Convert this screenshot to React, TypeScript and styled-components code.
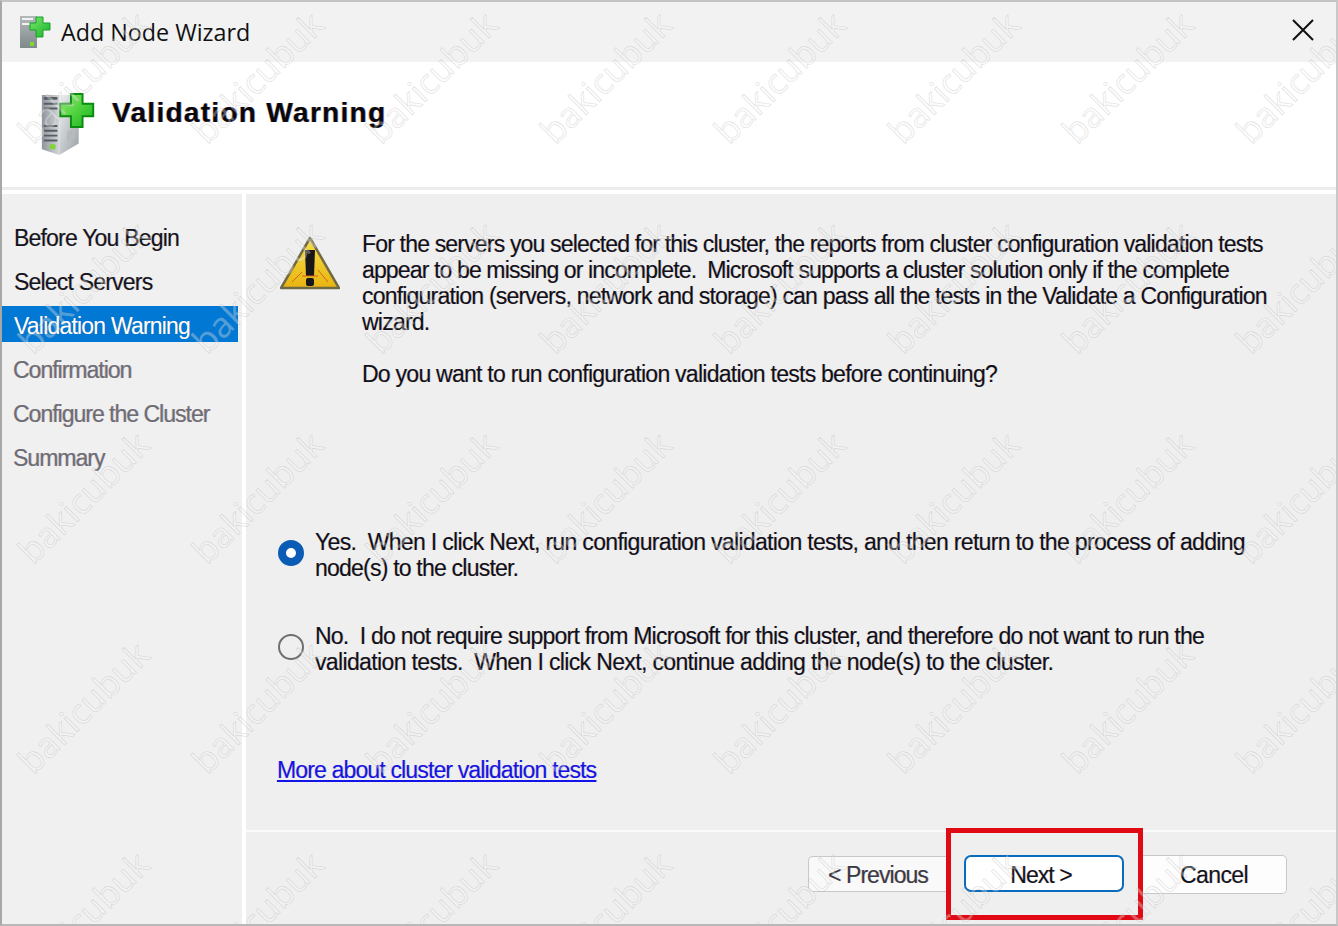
import styled, { createGlobalStyle } from 'styled-components';

const GlobalStyle = createGlobalStyle`
  html, body { margin: 0; padding: 0; background: #f0f0f0; }
  * { box-sizing: border-box; }
`;

const Win = styled.div`
  position: relative;
  width: 1338px;
  height: 926px;
  overflow: hidden;
  display: flex;
  flex-direction: column;
  background: #fff;
  border-top: 2px solid #c4c4c4;
  border-left: 2px solid #a8a8a8;
  border-right: 2px solid #c8c8c8;
  border-bottom: 2px solid #b8b8b8;
  font-family: 'Liberation Sans', Arial, sans-serif;
  color: #101018;
  text-shadow: -0.6px 0 rgba(220, 140, 60, 0.3), 0.6px 0 rgba(40, 70, 170, 0.3);
`;

const EdgeMark = styled.i<{ $top: number; $h: number }>`
  position: absolute;
  left: -2px;
  top: ${(p) => p.$top}px;
  width: 2px;
  height: ${(p) => p.$h}px;
  background: #55555c;
`;

const TitleBar = styled.div`
  height: 60px;
  flex: none;
  display: flex;
  align-items: center;
  background: #f2f2f2;
  padding-left: 17px;
  gap: 9px;
  text-shadow: none;
`;

const TitleText = styled.div`
  flex: 1;
  font-family: 'Open Sans', 'Noto Sans', sans-serif;
  font-size: 23.3px;
  color: #111;
`;

const CloseBtn = styled.div`
  width: 24px;
  height: 24px;
  margin-right: 21px;
  margin-top: -4px;
`;

const Banner = styled.div`
  height: 128px;
  flex: none;
  display: flex;
  align-items: flex-start;
  padding: 30px 0 0 36px;
  gap: 12px;
  background: #fff;
  border-bottom: 3px solid #ececec;
`;

const BannerTitle = styled.h1`
  margin: 3px 0 0;
  font-size: 28px;
  line-height: 36px;
  letter-spacing: 1.3px;
  font-weight: 700;
  color: #08080c;
  text-shadow: -0.7px 0 rgba(220, 130, 40, 0.55), 0.7px 0 rgba(30, 70, 190, 0.55);
`;

const Body = styled.div`
  flex: 1;
  min-height: 0;
  display: flex;
  gap: 4px;
  padding-top: 4px;
  background: #fff;
`;

const Sidebar = styled.nav`
  width: 240px;
  flex: none;
  background: #f0f0f0;
  padding-top: 24px;
  display: flex;
  flex-direction: column;
  gap: 8px;
`;

const Step = styled.div<{ $state: 'done' | 'active' | 'todo' }>`
  width: 236px;
  height: 36px;
  line-height: 40px;
  padding-left: ${(p) => (p.$state === 'todo' ? 11 : 12)}px;
  font-size: 23px;
  letter-spacing: ${(p) => (p.$state === 'todo' ? -1 : -0.8)}px;
  color: ${(p) => (p.$state === 'active' ? '#fff' : p.$state === 'todo' ? '#6d6d75' : '#14141c')};
  background: ${(p) => (p.$state === 'active' ? '#0078d4' : 'transparent')};
`;

const Panel = styled.div`
  flex: 1;
  display: flex;
  flex-direction: column;
  background: #efefef;
`;

const Main = styled.div`
  flex: 1;
  padding: 37px 0 0 31px;
  font-size: 23px;
  line-height: 26px;
  letter-spacing: -0.78px;
`;

const MessageRow = styled.div`
  display: flex;
  align-items: flex-start;
  gap: 22px;
  padding-left: 3px;
`;

const WarnIcon = styled.svg`
  width: 60px;
  height: 54px;
  flex: none;
  margin-top: 5px;
`;

const Line = styled.span<{ $fit?: number }>`
  display: block;
  white-space: pre;
  letter-spacing: ${(p) => p.$fit ?? -0.78}px;
`;

const Question = styled.p`
  margin: 26px 0 0;
  white-space: pre;
  letter-spacing: -0.74px;
`;

const Option = styled.div<{ $gap: number }>`
  display: flex;
  align-items: center;
  gap: 11px;
  margin-top: ${(p) => p.$gap}px;
  padding-left: 1px;
`;

const Radio = styled.span<{ $checked?: boolean }>`
  width: 26px;
  height: 26px;
  flex: none;
  margin-bottom: 4px;
  border-radius: 50%;
  background: ${(p) => (p.$checked ? '#fff' : 'transparent')};
  border: ${(p) => (p.$checked ? '8px solid #0a5cb4' : '2px solid #6f6f6f')};
`;

const HelpLink = styled.a`
  display: block;
  margin-top: 82px;
  color: #1414e6;
  text-decoration: underline;
  white-space: pre;
  letter-spacing: -0.85px;
`;

const Footer = styled.div`
  height: 94px;
  flex: none;
  border-top: 2px solid #fafafa;
`;

const ButtonRow = styled.div`
  display: flex;
  align-items: center;
  justify-content: flex-end;
  margin-top: -4px;
  padding-right: 49px;
`;

const Button = styled.button<{ $edge?: 'left' | 'right' }>`
  height: 37px;
  padding: 3px 0 0;
  background: #fdfdfd;
  border: 1px solid #c8c8c8;
  border-radius: 5px;
  font: inherit;
  font-size: 23px;
  letter-spacing: -0.95px;
  color: #14141c;
  text-shadow: inherit;
  ${(p) => p.$edge === 'left' && 'width: 139px; height: 36px; border-right: 0; border-radius: 5px 0 0 5px; margin-right: -1px; background: #f9f9f9; color: #3a3a44;'}
  ${(p) => p.$edge === 'right' && 'width: 145px; height: 39px; border-left: 0; border-radius: 0 5px 5px 0; margin-left: -1px; letter-spacing: -0.6px;'}
`;

const RedFrame = styled.div`
  position: relative;
  z-index: 1;
  width: 197px;
  height: 92px;
  flex: none;
  display: flex;
  align-items: center;
  justify-content: center;
  border: 5px solid #e10a14;
  background: #efefef;
`;

const DefaultButton = styled(Button)`
  width: 160px;
  border: 2px solid #0a6cbd;
  border-radius: 7px;
  background: #fff;
  margin: -1px 1px 0 0;
  padding-right: 6px;
`;

const Watermarks = styled.div`
  position: absolute;
  inset: -2px;
  pointer-events: none;
  z-index: 2;
`;

const Mark = styled.span`
  position: absolute;
  transform: translate(-50%, -50%) rotate(-45deg);
  font-family: 'Open Sans', sans-serif;
  font-size: 35px;
  line-height: 1;
  color: rgba(250, 250, 250, 0.32);
  -webkit-text-stroke: 0.8px rgba(150, 150, 150, 0.25);
  text-shadow: none;
  white-space: nowrap;
`;

const TitleIcon = () => (
  <svg width="33" height="34" viewBox="0 0 33 34" style={{ flex: 'none' }}>
    <defs>
      <linearGradient id="tbody" x1="0" y1="0" x2="0" y2="1">
        <stop offset="0" stopColor="#b4b8bb" />
        <stop offset="1" stopColor="#7f8a8a" />
      </linearGradient>
      <linearGradient id="tplus" x1="0" y1="0" x2="1" y2="1">
        <stop offset="0" stopColor="#7be86a" />
        <stop offset="1" stopColor="#16b32a" />
      </linearGradient>
    </defs>
    <rect x="1" y="1" width="17" height="32" fill="url(#tbody)" />
    <path d="M3 3h11v2H3zM3 8h11v2H3z" fill="#f2f2f2" />
    <rect x="11" y="27" width="4" height="4" fill="#7fd636" />
    <path
      d="M17 2 H24 V8 H31 V15 H24 V22 H17 V15 H11 V8 H17 Z"
      fill="url(#tplus)"
      stroke="#16a02a"
      strokeWidth="1"
    />
  </svg>
);

const ServerIcon = () => (
  <svg width="62" height="64" viewBox="0 0 64 64" style={{ flex: 'none' }}>
    <defs>
      <linearGradient id="front" x1="0" y1="0" x2="1" y2="0">
        <stop offset="0" stopColor="#8f959c" />
        <stop offset="1" stopColor="#d3d7da" />
      </linearGradient>
      <linearGradient id="side" x1="0" y1="0" x2="1" y2="1">
        <stop offset="0" stopColor="#f0f2f3" />
        <stop offset="1" stopColor="#9aa0a5" />
      </linearGradient>
      <linearGradient id="plus" x1="0" y1="0" x2="1" y2="1">
        <stop offset="0" stopColor="#8df06c" />
        <stop offset="1" stopColor="#16b416" />
      </linearGradient>
    </defs>
    <path d="M4 2 L22 2 L22 64 L4 58 Z" fill="url(#front)" />
    <path d="M22 2 L42 2 L42 52 L22 64 Z" fill="url(#side)" />
    <path d="M6 4h14v3H6zM6 10h14v2H6zM6 15h14v2H6zM6 33h14v2H6zM6 38h14v2H6zM6 43h14v2H6zM6 48h14v2H6z" fill="#565c62" />
    <path d="M30 40 L38 36 V46 L30 50 Z" fill="#b5babd" />
    <rect x="12" y="53" width="6" height="5" fill="#7fd636" />
    <path
      d="M34 11 H23 V24 H34 V35 H46 V24 H57 V11 H46 V1 H34 Z"
      fill="url(#plus)"
      stroke="#0c8a12"
      strokeWidth="2"
    />
  </svg>
);

const steps: { label: string; state: 'done' | 'active' | 'todo' }[] = [
  { label: 'Before You Begin', state: 'done' },
  { label: 'Select Servers', state: 'done' },
  { label: 'Validation Warning', state: 'active' },
  { label: 'Confirmation', state: 'todo' },
  { label: 'Configure the Cluster', state: 'todo' },
  { label: 'Summary', state: 'todo' },
];

const marks: [number, number][] = [];
[77, 287, 497, 707, 917].forEach((y) => {
  [83, 257, 431, 605, 779, 953, 1127, 1301].forEach((x) => marks.push([x, y]));
});

export default function App() {
  return (
    <>
      <GlobalStyle />
      <Win>
        <EdgeMark $top={18} $h={46} />
        <EdgeMark $top={232} $h={50} />
        <EdgeMark $top={348} $h={36} />
        <TitleBar>
          <TitleIcon />
          <TitleText>Add Node Wizard</TitleText>
          <CloseBtn>
            <svg width="24" height="24" viewBox="0 0 24 24">
              <path d="M2 2 L22 22 M22 2 L2 22" stroke="#111" strokeWidth="2" fill="none" />
            </svg>
          </CloseBtn>
        </TitleBar>
        <Banner>
          <ServerIcon />
          <BannerTitle>Validation Warning</BannerTitle>
        </Banner>
        <Body>
          <Sidebar>
            {steps.map((s) => (
              <Step key={s.label} $state={s.state}>
                {s.label}
              </Step>
            ))}
          </Sidebar>
          <Panel>
            <Main>
              <MessageRow>
                <WarnIcon viewBox="0 0 60 54">
                  <defs>
                    <linearGradient id="warn" x1="0" y1="0" x2="0" y2="1">
                      <stop offset="0" stopColor="#f7e04a" />
                      <stop offset="1" stopColor="#e8b410" />
                    </linearGradient>
                  </defs>
                  <path d="M30 2 L59 52 L1 52 Z" fill="url(#warn)" stroke="#6f6a45" strokeWidth="2.5" strokeLinejoin="round" />
                  <path d="M25 14 h10 l-1 26 h-8 Z" fill="#17171a" />
                  <rect x="26" y="42" width="8" height="8" rx="2" fill="#17171a" />
                  <path d="M12 46 L22 36 M38 34 L48 46 M22 40 H38" stroke="#d9621c" strokeWidth="1" fill="none" />
                </WarnIcon>
                <div>
                  <Line $fit={-0.82}>For the servers you selected for this cluster, the reports from cluster configuration validation tests</Line>
                  <Line $fit={-0.86}>appear to be missing or incomplete.  Microsoft supports a cluster solution only if the complete</Line>
                  <Line $fit={-0.8}>configuration (servers, network and storage) can pass all the tests in the Validate a Configuration</Line>
                  <Line>wizard.</Line>
                  <Question>Do you want to run configuration validation tests before continuing?</Question>
                </div>
              </MessageRow>
              <Option $gap={142}>
                <Radio $checked />
                <div>
                  <Line $fit={-0.67}>Yes.  When I click Next, run configuration validation tests, and then return to the process of adding</Line>
                  <Line>node(s) to the cluster.</Line>
                </div>
              </Option>
              <Option $gap={42}>
                <Radio />
                <div>
                  <Line $fit={-0.77}>No.  I do not require support from Microsoft for this cluster, and therefore do not want to run the</Line>
                  <Line $fit={-0.64}>validation tests.  When I click Next, continue adding the node(s) to the cluster.</Line>
                </div>
              </Option>
              <HelpLink href="#">More about cluster validation tests</HelpLink>
            </Main>
            <Footer>
              <ButtonRow>
                <Button $edge="left">&lt; Previous</Button>
                <RedFrame>
                  <DefaultButton>Next &gt;</DefaultButton>
                </RedFrame>
                <Button $edge="right">Cancel</Button>
              </ButtonRow>
            </Footer>
          </Panel>
        </Body>
        <Watermarks>
          {marks.map(([x, y]) => (
            <Mark key={`${x}-${y}`} style={{ left: x, top: y }}>
              bakicubuk
            </Mark>
          ))}
        </Watermarks>
      </Win>
    </>
  );
}
